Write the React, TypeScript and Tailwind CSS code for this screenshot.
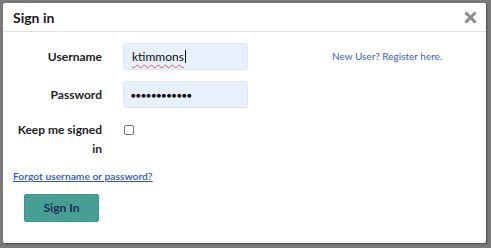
import React from 'react';

const font = { fontFamily: 'Lato, "Noto Sans", "Liberation Sans", sans-serif' };

function Field({ label, children }: { label: string; children: React.ReactNode }) {
  return (
    <div className="flex items-center">
      <label className="w-[100px] pr-[1px] text-right text-[12px] font-bold text-[#222]">{label}</label>
      <div className="ml-[20px]">{children}</div>
    </div>
  );
}

export default function App() {
  return (
    <div className="w-[491px] h-[248px] bg-[#7a7a7a] pl-[3px] pt-[3px] pr-[5px] pb-[5px]" style={font}>
      <div className="relative h-full w-full bg-white rounded-[2px] shadow-[1px_1px_2px_rgba(0,0,0,0.4)]">
        <div className="flex h-[29px] items-center justify-between border-b border-[#e3e3e3] pl-[10px] pr-[9px]">
          <h2 className="text-[14px] font-bold text-[#1a1a1a]">Sign in</h2>
          <svg width="13" height="13" viewBox="0 0 13 13" className="mt-[1px]">
            <path d="M1.5 1.5 L11.5 11.5 M11.5 1.5 L1.5 11.5" stroke="#8c8c8c" strokeWidth="3" strokeLinecap="butt" />
          </svg>
        </div>
        <div className="flex pt-[11px]">
          <div className="flex flex-col gap-[11px]">
            <Field label="Username">
              <div className="flex h-[27px] w-[125px] items-center rounded-[3px] border border-[#dfe6f2] bg-[#e8f0fe] px-[8px] text-[12px] text-[#111]">
                <span className="underline decoration-wavy decoration-[#e05050] decoration-[1px] underline-offset-[3px]">ktimmons</span>
                <span className="ml-[1px] h-[13px] w-[1px] bg-[#111]" />
              </div>
            </Field>
            <Field label="Password">
              <div className="flex h-[27px] w-[125px] items-center rounded-[3px] border border-[#dfe6f2] bg-[#e8f0fe] px-[7px] text-[8px] tracking-[0.3px] text-[#111]">
                ●●●●●●●●●●●●
              </div>
            </Field>
            <div className="flex items-start pt-[1px]">
              <label className="w-[100px] pr-[1px] text-right text-[12px] font-bold leading-[19px] text-[#222]">
                Keep me signed
                <br />
                in
              </label>
              <input type="checkbox" className="ml-[21px] mt-[5px] h-[10px] w-[10px] appearance-none rounded-[2px] border border-[#777] bg-white" />
            </div>
          </div>
          <a className="ml-[84px] mt-[6px] text-[10px] text-[#3b5ccf]">New User? Register here.</a>
        </div>
        <a className="mt-[11px] ml-[10px] block w-fit text-[10.3px] font-semibold text-[#2c54d8] underline">
          Forgot username or password?
        </a>
        <button className="ml-[21px] mt-[10px] h-[28px] w-[75px] rounded-[2px] border border-[#3d9489] bg-[#459f94] text-[12px] font-bold text-[#1f2d56]">
          Sign In
        </button>
      </div>
    </div>
  );
}
